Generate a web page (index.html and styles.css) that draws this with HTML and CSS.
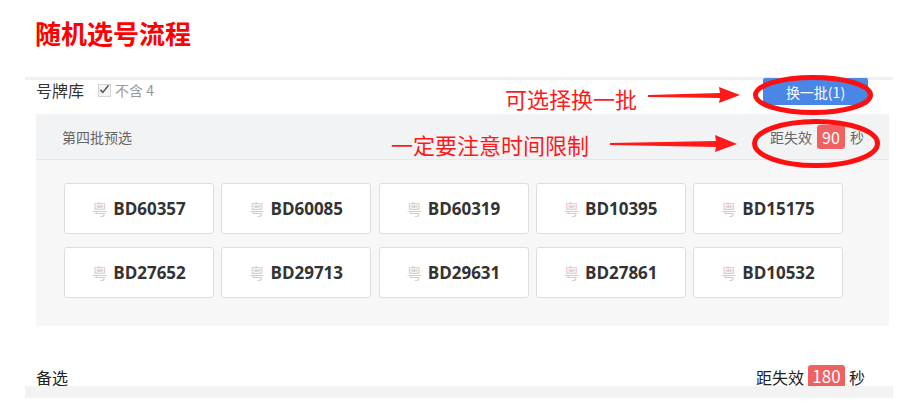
FILE: index.html
```html
<!DOCTYPE html>
<html lang="zh-CN">
<head>
    <meta charset="UTF-8">
    <meta name="viewport" content="width=device-width, initial-scale=1.0">
    <title>随机选号流程</title>
    <link rel="stylesheet" href="styles.css">
</head>
<body>
    <h1 class="title">随机选号流程</h1>

    <div class="page">
        <div class="toolbar">
            <span class="pool-label">号牌库</span>
            <label class="no-four">
                <span class="checkbox">
                    <svg width="13" height="13" viewBox="0 0 13 13"><path d="M2.5 6.8 L5.2 9.6 L11.5 2" fill="none" stroke="#555" stroke-width="1.6"/></svg>
                </span>
                不含 4
            </label>
            <button class="btn-refresh">换一批(1)</button>
        </div>

        <div class="panel">
            <div class="panel-head">
                <span class="panel-title">第四批预选</span>
                <span class="expire">距失效 <span class="badge">90</span> 秒</span>
            </div>
            <div class="plates" id="plates"></div>
        </div>

        <div class="backup">
            <span class="backup-title">备选</span>
            <span class="expire expire-lg">距失效 <span class="badge badge-lg">180</span> 秒</span>
        </div>
        <div class="backup-bar"></div>
    </div>

    <!-- annotations -->
    <span class="note note-refresh">可选择换一批</span>
    <span class="note note-time">一定要注意时间限制</span>
    <svg class="marks" width="910" height="411" viewBox="0 0 910 411">
        <polygon points="648,95 720,93 719,87 740,95 719,103 720,98 648,97" fill="#ff1a1a"/>
        <polygon points="610,143 716,141 715,135 737,144 715,152 716,147 610,145" fill="#ff1a1a"/>
        <ellipse cx="813" cy="95" rx="57.5" ry="17.5" fill="none" stroke="#ff1010" stroke-width="5"/>
        <ellipse cx="816" cy="143.5" rx="61.5" ry="22" fill="none" stroke="#ff1010" stroke-width="5"/>
    </svg>

    <script>
        const plates = ['BD60357', 'BD60085', 'BD60319', 'BD10395', 'BD15175',
                        'BD27652', 'BD29713', 'BD29631', 'BD27861', 'BD10532'];

        const box = document.getElementById('plates');
        plates.forEach(p => {
            const card = document.createElement('div');
            card.className = 'plate';
            card.innerHTML = '<span class="province">粤</span><span class="number">' + p + '</span>';
            box.appendChild(card);
        });
    </script>
</body>
</html>
```

FILE: styles.css
```css
body {
    margin: 0;
    width: 910px;
    height: 411px;
    overflow: hidden;
    position: relative;
    background: #fff;
    font-family: "Noto Sans CJK SC", "Noto Sans", sans-serif;
    color: #333;
}
.title {
    margin: 0;
    padding: 16px 0 0 35px;
    height: 77px;
    box-sizing: border-box;
    font-size: 26px;
    line-height: 34px;
    font-weight: bold;
    color: #ff0000;
}
.page {
    margin: 0 17px 0 25px;
    border-top: 3px solid #f0f0f2;
}
.toolbar {
    display: flex;
    align-items: flex-start;
    height: 34px;
    padding-left: 11px;
}
.pool-label {
    font-size: 16px;
    line-height: 20px;
}
.no-four {
    display: flex;
    align-items: center;
    gap: 4px;
    margin-left: 14px;
    font-size: 14px;
    line-height: 20px;
    color: #999;
}
.checkbox {
    display: inline-flex;
    width: 13px;
    height: 13px;
    border: 1px solid #d4d4d4;
    background: #f4f4f4;
    box-sizing: border-box;
    overflow: visible;
}
.checkbox svg {
    margin: -2px 0 0 -1px;
}
.btn-refresh {
    margin-left: auto;
    margin-right: 25px;
    margin-top: -2px;
    width: 105px;
    height: 27px;
    border: none;
    border-radius: 2px;
    background: #4a86e6;
    color: #fff;
    font-family: inherit;
    font-size: 14px;
    padding: 0;
}
.panel {
    margin: 0 4px 0 11px;
    background: #f7f7f7;
}
.panel-head {
    display: flex;
    align-items: center;
    justify-content: space-between;
    height: 45px;
    padding: 0 25px 0 26px;
    background: #f2f3f5;
    border-bottom: 1px solid #e6e7ea;
}
.panel-title {
    font-size: 14px;
    color: #666;
}
.expire {
    display: flex;
    align-items: center;
    gap: 5px;
    font-size: 14px;
    color: #666;
}
.badge {
    display: inline-block;
    min-width: 28px;
    height: 24px;
    line-height: 24px;
    padding: 0 3px;
    box-sizing: border-box;
    border-radius: 3px;
    background: #f06262;
    color: #fff;
    font-size: 16px;
    text-align: center;
}
.plates {
    display: grid;
    grid-template-columns: repeat(5, 150px);
    column-gap: 7.25px;
    row-gap: 13px;
    padding: 23px 28px 28px;
}
.plate {
    display: flex;
    align-items: center;
    justify-content: center;
    gap: 6px;
    height: 51px;
    box-sizing: border-box;
    background: #fff;
    border: 1px solid #dedde2;
    border-radius: 3px;
}
.province {
    font-size: 15px;
    color: #dcc9c9;
}
.number {
    font-family: "Open Sans", "Noto Sans", sans-serif;
    font-size: 17px;
    font-weight: bold;
    color: #333;
}
.backup {
    display: flex;
    align-items: flex-end;
    justify-content: space-between;
    height: 21px;
    margin: 39px 28px 0 11px;
}
.backup-title {
    font-size: 16px;
    line-height: 18px;
    color: #222;
}
.expire-lg {
    font-size: 16px;
    line-height: 18px;
    color: #222;
    gap: 4px;
    align-items: flex-end;
}
.badge-lg {
    min-width: 37px;
    height: 21px;
    line-height: 22px;
    font-size: 17px;
    border-radius: 3px 3px 0 0;
}
.backup-bar {
    height: 12px;
    background: #f3f3f3;
}
.note {
    position: absolute;
    font-size: 22px;
    line-height: 24px;
    color: #ff1a1a;
}
.note-refresh {
    left: 505px;
    top: 86px;
}
.note-time {
    left: 391px;
    top: 132px;
}
.marks {
    position: absolute;
    left: 0;
    top: 0;
    pointer-events: none;
}
```
